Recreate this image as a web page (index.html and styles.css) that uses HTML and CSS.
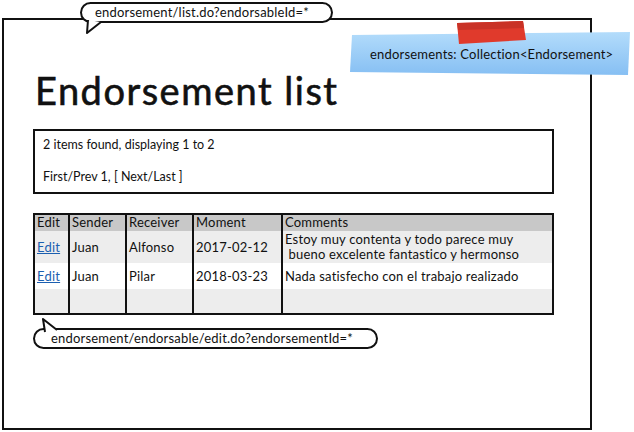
FILE: index.html
```html
<!DOCTYPE html>
<html>
<head>
<meta charset="utf-8">
<link rel="stylesheet" href="styles.css">
</head>
<body>
<div class="frame">
  <h1 class="title">Endorsement list</h1>
  <div class="info">
    <p>2 items found, displaying 1 to 2</p>
    <p>First/Prev 1, [ Next/Last ]</p>
  </div>
  <table class="grid">
    <colgroup>
      <col class="c-edit"><col class="c-sender"><col class="c-receiver"><col class="c-moment"><col class="c-comments">
    </colgroup>
    <thead>
      <tr><th>Edit</th><th>Sender</th><th>Receiver</th><th>Moment</th><th>Comments</th></tr>
    </thead>
    <tbody>
      <tr class="r1"><td><a href="#">Edit</a></td><td>Juan</td><td>Alfonso</td><td>2017-02-12</td><td class="multi">Estoy muy contenta y todo parece muy<br>&nbsp;bueno excelente fantastico y hermonso</td></tr>
      <tr class="r2"><td><a href="#">Edit</a></td><td>Juan</td><td>Pilar</td><td>2018-03-23</td><td>Nada satisfecho con el trabajo realizado</td></tr>
      <tr class="r3"><td></td><td></td><td></td><td></td><td></td></tr>
    </tbody>
  </table>
</div>

<div class="bubble bubble-top">endorsement/list.do?endorsableId=*</div>
<svg class="tail tail-top" width="20" height="16" viewBox="0 0 20 16"><path d="M3 0 L2 13 L16 2" fill="#fff" stroke="#111" stroke-width="2" stroke-linejoin="round"/></svg>

<div class="bubble bubble-bottom">endorsement/endorsable/edit.do?endorsementId=*</div>
<svg class="tail tail-bottom" width="24" height="16" viewBox="0 0 24 16"><path d="M4 14 L2 1 L16 12" fill="#fff" stroke="#111" stroke-width="2" stroke-linejoin="round"/></svg>

<div class="note">
  <svg class="note-bg" width="284" height="56" viewBox="0 0 284 56">
    <defs>
      <linearGradient id="bl" x1="0" y1="0" x2="0" y2="1">
        <stop offset="0" stop-color="#b3dcfb"/>
        <stop offset="1" stop-color="#86bff3"/>
      </linearGradient>
    </defs>
    <polygon points="4,14 282,11 280,54 2,51" fill="url(#bl)"/>
    <polygon points="109,2 175,0 178,19 111,23" fill="#e03a2c"/>
    <polygon points="109,2 175,0 176,7 110,9" fill="#c93226"/>
  </svg>
  <span class="note-text">endorsements: Collection&lt;Endorsement&gt;</span>
</div>
</body>
</html>
```
FILE: styles.css
```css
* { box-sizing: border-box; }
html, body { margin: 0; padding: 0; background: #fff; }
body {
  font-family: "Lato", "Liberation Sans", sans-serif;
  color: #111;
  width: 634px;
  height: 432px;
  position: relative;
  overflow: hidden;
}
.frame {
  margin: 18px 0 0 2px;
  width: 590px;
  height: 412px;
  border: 2px solid #111;
  padding: 50px 36px 0 29px;
}
.title {
  margin: 0 0 0 2px;
  font-family: "Lato", sans-serif;
  font-weight: 400;
  -webkit-text-stroke: 0.6px #111;
  font-size: 38px;
  line-height: 40px;
  letter-spacing: 1.5px;
  height: 59px;
}
.info {
  height: 65px;
  border: 2px solid #111;
  padding: 6px 0 0 8px;
  font-size: 12.5px;
}
.info p { margin: 0; line-height: 16px; height: 32px; }
.grid {
  margin-top: 19px;
  width: 521px;
  border-collapse: collapse;
  border: 2px solid #111;
  font-size: 13px;
  letter-spacing: 0.2px;
  table-layout: fixed;
}
.c-edit { width: 35px; }
.c-sender { width: 57px; }
.c-receiver { width: 67px; }
.c-moment { width: 89px; }
.grid th, .grid td {
  border-left: 2px solid #111;
  border-right: 2px solid #111;
  padding: 0 0 0 2px;
  text-align: left;
  font-weight: normal;
  white-space: nowrap;
  overflow: hidden;
}
.grid th { background: #c8c8c8; height: 17px; line-height: 15px; vertical-align: top; }
.grid tr.r1 td { background: #ededed; height: 32px; }
.grid tr.r2 td { background: #fff; height: 26px; }
.grid tr.r3 td { background: #ededed; height: 25px; }
.grid td.multi { line-height: 15px; vertical-align: top; padding-top: 1px; }
.grid a { color: #1b5fb0; text-decoration: underline; }

.bubble {
  position: absolute;
  background: #fff;
  border: 2px solid #111;
  border-radius: 11px;
  font-size: 13px;
  letter-spacing: 0.2px;
  line-height: 17px;
  padding: 0 0 0 13px;
  white-space: nowrap;
}
.bubble-top { left: 80px; top: 2px; width: 253px; height: 21px; }
.bubble-bottom { left: 33px; top: 328px; width: 345px; height: 21px; padding-left: 16px; }
.tail { position: absolute; overflow: visible; }
.tail-top { left: 85px; top: 20px; }
.tail-bottom { left: 41px; top: 318px; }

.note { position: absolute; left: 348px; top: 21px; width: 284px; height: 56px; }
.note-bg { position: absolute; left: 0; top: 0; }
.note-text {
  position: absolute;
  left: 22px;
  top: 26px;
  font-size: 13px;
  letter-spacing: 0.2px;
  line-height: 15px;
  white-space: nowrap;
}
```
